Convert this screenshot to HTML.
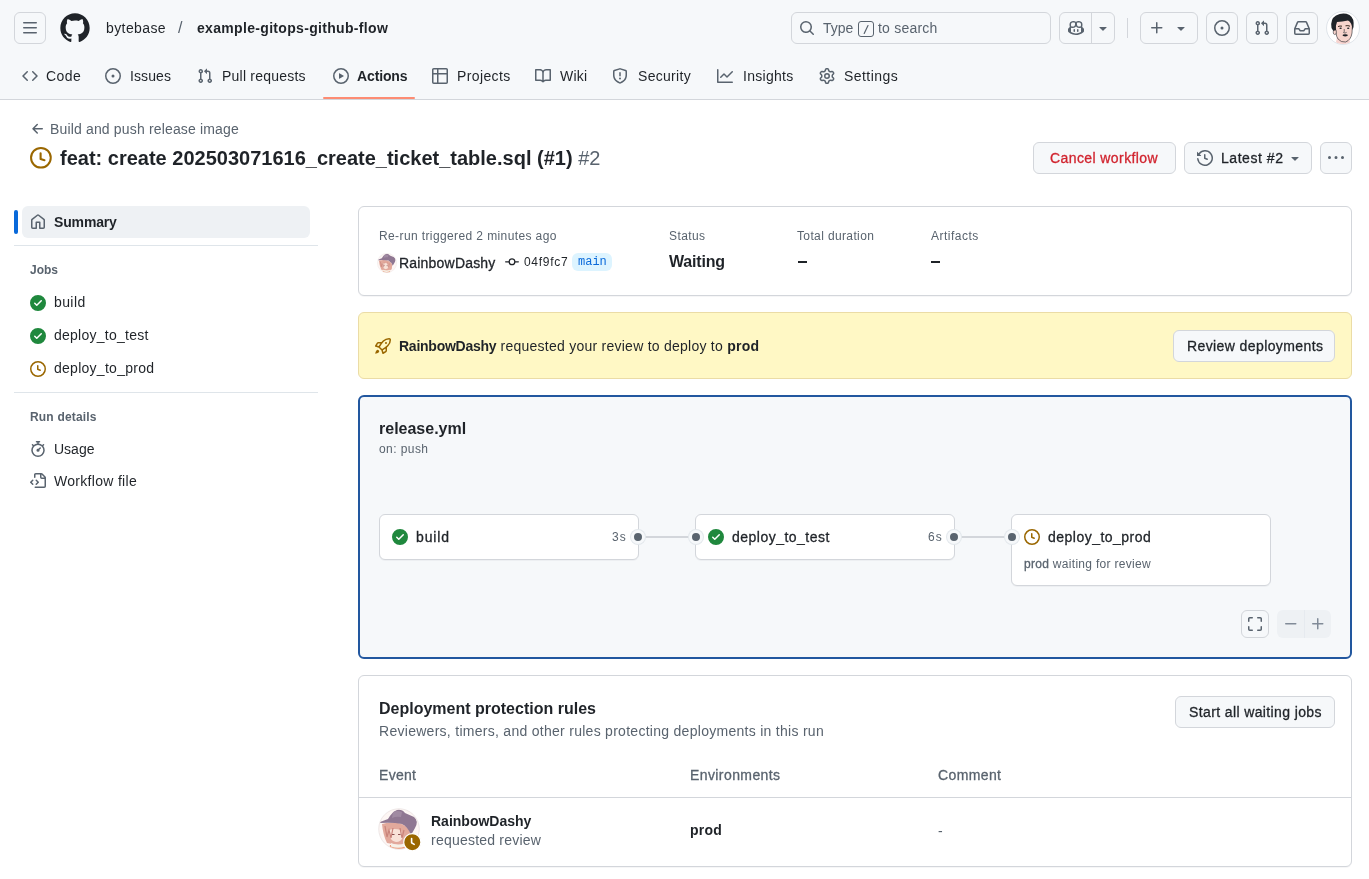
<!DOCTYPE html>
<html><head><meta charset="utf-8">
<style>
*{box-sizing:border-box;margin:0;padding:0}
html,body{width:1369px;height:879px;overflow:hidden;background:#fff}
.t{will-change:transform}
body{font-family:"Liberation Sans",sans-serif;font-size:14px;color:#1f2328;position:relative}
.abs{position:absolute}
svg{display:block}
.ic{fill:#59636e}
.hdr{position:absolute;left:0;top:0;width:1369px;height:100px;background:#f6f8fa;border-bottom:1px solid #d3d6db}
.btn{position:absolute;border:1px solid #d3d6db;border-radius:6px;background:#f6f8fa}
.t{position:absolute;white-space:nowrap;line-height:1}
.muted{color:#59636e}
.b{font-weight:bold}
.dot{width:14px;height:14px;border-radius:50%;background:#59636e;border:3px solid #f6f8fa;box-shadow:0 0 0 1px #e3e8ec}
.m{-webkit-text-stroke:.3px currentColor}
.box{position:absolute;border:1px solid #d3d6db;box-shadow:0 1px 0 rgba(31,35,40,.04);border-radius:6px;background:#fff}
</style></head><body>
<div class="hdr">
  <div class="btn" style="left:14px;top:12px;width:32px;height:32px">
    <svg class="abs" style="left:7px;top:7px" width="16" height="16" viewBox="0 0 16 16"><path class="ic" d="M1 2.75A.75.75 0 0 1 1.75 2h12.5a.75.75 0 0 1 0 1.5H1.75A.75.75 0 0 1 1 2.75Zm0 5A.75.75 0 0 1 1.75 7h12.5a.75.75 0 0 1 0 1.5H1.75A.75.75 0 0 1 1 7.75ZM1.75 12h12.5a.75.75 0 0 1 0 1.5H1.75a.75.75 0 0 1 0-1.5Z"/></svg>
  </div>
  <svg class="abs" style="left:59px;top:12px" width="32" height="32" viewBox="0 0 24 24"><path fill="#1f2328" d="M12 1C5.923 1 1 5.923 1 12c0 4.867 3.149 8.979 7.521 10.436.55.096.756-.233.756-.522 0-.262-.013-1.128-.013-2.049-2.764.509-3.479-.674-3.699-1.292-.124-.317-.66-1.293-1.127-1.554-.385-.207-.936-.715-.014-.729.866-.014 1.485.797 1.691 1.128.99 1.663 2.571 1.196 3.204.907.096-.715.385-1.196.701-1.471-2.448-.275-5.005-1.224-5.005-5.432 0-1.196.426-2.186 1.128-2.956-.111-.275-.496-1.402.11-2.915 0 0 .921-.288 3.024 1.128a10.193 10.193 0 0 1 2.75-.371c.936 0 1.871.123 2.75.371 2.104-1.43 3.025-1.128 3.025-1.128.605 1.513.221 2.64.111 2.915.701.77 1.127 1.747 1.127 2.956 0 4.222-2.571 5.157-5.019 5.432.399.344.743 1.004.743 2.035 0 1.471-.014 2.654-.014 3.025 0 .289.206.632.756.522C19.851 20.979 23 16.854 23 12c0-6.077-4.922-11-11-11Z"/></svg>
  <div class="t" style="left:106px;top:21px;letter-spacing:.4px">bytebase</div>
  <div class="t muted" style="left:178px;top:20px;font-size:16px">/</div>
  <div class="t b" style="left:197px;top:21px;letter-spacing:.32px">example-gitops-github-flow</div>

  <!-- search -->
  <div class="btn" style="left:791px;top:12px;width:260px;height:32px">
    <svg class="abs" style="left:7px;top:7px" width="16" height="16" viewBox="0 0 16 16"><path class="ic" d="M10.68 11.74a6 6 0 0 1-7.922-8.982 6 6 0 0 1 8.982 7.922l3.04 3.04a.749.749 0 0 1-.326 1.275.749.749 0 0 1-.734-.215ZM11.5 7a4.499 4.499 0 1 0-8.997 0A4.499 4.499 0 0 0 11.5 7Z"/></svg>
    <div class="t muted" style="left:31px;top:8px">Type</div>
    <div class="abs" style="left:66px;top:8px;width:16px;height:16px;border:1px solid #59636e;border-radius:3px"><svg class="abs" style="left:0;top:0" width="14" height="14" viewBox="0 0 14 13"><path d="M9 3 5.2 11" stroke="#59636e" stroke-width="1.2" stroke-linecap="round"/></svg></div>
    <div class="t muted" style="left:86px;top:8px;letter-spacing:.22px">to search</div>
  </div>

  <!-- copilot group -->
  <div class="btn" style="left:1059px;top:12px;width:56px;height:32px">
    <div class="abs" style="left:31px;top:0;width:1px;height:30px;background:#d3d6db"></div>
    <svg class="abs" style="left:8px;top:7px" width="16" height="16" viewBox="0 0 16 16"><path class="ic" d="M7.998 15.035c-4.562 0-7.873-2.914-7.998-3.749V9.338c.085-.628.677-1.686 1.588-2.065.013-.07.024-.143.036-.218.029-.183.06-.384.126-.612-.201-.508-.254-1.084-.254-1.656 0-.87.128-1.769.693-2.484.579-.733 1.494-1.124 2.724-1.261 1.206-.134 2.262.034 2.944.765.05.053.096.108.139.165.044-.057.094-.112.143-.165.682-.731 1.738-.899 2.944-.765 1.23.137 2.145.528 2.724 1.261.566.715.693 1.614.693 2.484 0 .572-.053 1.148-.254 1.656.066.228.098.429.126.612.012.076.024.148.037.218.924.385 1.522 1.471 1.591 2.095v1.872c0 .766-3.351 3.795-8.002 3.795Zm0-1.485c2.28 0 4.584-1.11 5.002-1.433V7.862l-.023-.116c-.49.21-1.075.291-1.727.291-1.146 0-2.059-.327-2.71-.991A3.222 3.222 0 0 1 8 6.303a3.24 3.24 0 0 1-.544.743c-.65.664-1.563.991-2.71.991-.652 0-1.236-.081-1.727-.291l-.023.116v4.255c.419.323 2.722 1.433 5.002 1.433ZM6.762 2.83c-.193-.206-.637-.413-1.682-.297-1.019.113-1.479.404-1.713.7-.247.312-.369.789-.369 1.554 0 .793.129 1.171.308 1.371.162.181.519.379 1.442.379.853 0 1.339-.235 1.638-.54.315-.322.527-.827.617-1.553.117-.935-.037-1.395-.241-1.614Zm4.155-.297c-1.044-.116-1.488.091-1.681.297-.204.219-.359.679-.242 1.614.091.726.303 1.231.618 1.553.299.305.784.54 1.638.54.922 0 1.280-.198 1.442-.379.179-.2.308-.578.308-1.371 0-.765-.123-1.242-.37-1.554-.233-.296-.693-.587-1.713-.7Z"/><path class="ic" d="M6.25 9.037a.75.75 0 0 1 .75.75v1.501a.75.75 0 0 1-1.5 0V9.787a.75.75 0 0 1 .75-.75Zm4.25.75v1.501a.75.75 0 0 1-1.5 0V9.787a.75.75 0 0 1 1.5 0Z"/></svg>
    <svg class="abs" style="left:35px;top:7px" width="16" height="16" viewBox="0 0 16 16"><path class="ic" d="m4.427 7.427 3.396 3.396a.25.25 0 0 0 .354 0l3.396-3.396A.25.25 0 0 0 11.396 7H4.604a.25.25 0 0 0-.177.427Z"/></svg>
  </div>
  <div class="abs" style="left:1127px;top:18px;width:1px;height:20px;background:#d3d6db"></div>
  <div class="btn" style="left:1140px;top:12px;width:58px;height:32px">
    <svg class="abs" style="left:8px;top:7px" width="16" height="16" viewBox="0 0 16 16"><path class="ic" d="M7.75 2a.75.75 0 0 1 .75.75V7h4.25a.75.75 0 0 1 0 1.5H8.5v4.25a.75.75 0 0 1-1.5 0V8.5H2.75a.75.75 0 0 1 0-1.5H7V2.75A.75.75 0 0 1 7.75 2Z"/></svg>
    <svg class="abs" style="left:32px;top:7px" width="16" height="16" viewBox="0 0 16 16"><path class="ic" d="m4.427 7.427 3.396 3.396a.25.25 0 0 0 .354 0l3.396-3.396A.25.25 0 0 0 11.396 7H4.604a.25.25 0 0 0-.177.427Z"/></svg>
  </div>
  <div class="btn" style="left:1206px;top:12px;width:32px;height:32px">
    <svg class="abs" style="left:7px;top:7px" width="16" height="16" viewBox="0 0 16 16"><path class="ic" d="M8 9.5a1.5 1.5 0 1 0 0-3 1.5 1.5 0 0 0 0 3Z"/><path class="ic" d="M8 0a8 8 0 1 1 0 16A8 8 0 0 1 8 0ZM1.5 8a6.5 6.5 0 1 0 13 0 6.5 6.5 0 0 0-13 0Z"/></svg>
  </div>
  <div class="btn" style="left:1246px;top:12px;width:32px;height:32px">
    <svg class="abs" style="left:7px;top:7px" width="16" height="16" viewBox="0 0 16 16"><path class="ic" d="M1.5 3.25a2.25 2.25 0 1 1 3 2.122v5.256a2.251 2.251 0 1 1-1.5 0V5.372A2.25 2.25 0 0 1 1.5 3.25Zm5.677-.177L9.573.677A.25.25 0 0 1 10 .854V2.5h1A2.5 2.5 0 0 1 13.5 5v5.628a2.251 2.251 0 1 1-1.500 0V5a1 1 0 0 0-1-1h-1v1.646a.25.25 0 0 1-.427.177L7.177 3.427a.25.25 0 0 1 0-.354ZM3.75 2.5a.75.75 0 1 0 0 1.5.75.75 0 0 0 0-1.5Zm0 9.5a.75.75 0 1 0 0 1.5.75.75 0 0 0 0-1.5Zm8.25.75a.75.75 0 1 0 1.5 0 .75.75 0 0 0-1.5 0Z"/></svg>
  </div>
  <div class="btn" style="left:1286px;top:12px;width:32px;height:32px">
    <svg class="abs" style="left:7px;top:7px" width="16" height="16" viewBox="0 0 16 16"><path class="ic" d="M2.8 2.06A1.75 1.75 0 0 1 4.41 1h7.18c.7 0 1.333.417 1.61 1.06l2.74 6.395c.04.093.06.194.06.295v4.5A1.75 1.75 0 0 1 14.25 15H1.75A1.75 1.75 0 0 1 0 13.25v-4.5c0-.101.02-.202.06-.295Zm1.61.44a.25.25 0 0 0-.23.152L1.887 8H4.75a.75.75 0 0 1 .6.3L6.625 10h2.75l1.275-1.7a.75.75 0 0 1 .6-.3h2.863L11.82 2.652a.25.25 0 0 0-.23-.152Zm10.09 7h-2.875l-1.275 1.7a.75.75 0 0 1-.6.3h-3.5a.75.75 0 0 1-.6-.3L4.375 9.5H1.5v3.75c0 .138.112.25.25.25h12.5a.25.25 0 0 0 .25-.25Z"/></svg>
  </div>
  <!-- avatar -->
  <svg class="abs" style="left:1326px;top:11px" width="34" height="34" viewBox="0 0 34 34">
    <circle cx="17" cy="17" r="16.5" fill="#fff" stroke="#d8dee4" stroke-width=".8"/>
    <clipPath id="avc"><circle cx="17" cy="17" r="16"/></clipPath>
    <g clip-path="url(#avc)">
      <path d="M11 26 L23 26 L24.5 34 L9.5 34Z" fill="#f6d3cf"/>
      <path d="M9.5 10 Q9 24 12 28 Q15 31.5 19.5 31 Q25 29 26 22 L26.5 12 Q23 7 17 7.5 Q11 8 9.5 10Z" fill="#f7d4cc" stroke="#1f2328" stroke-width=".6"/>
      <ellipse cx="8.8" cy="21" rx="1.6" ry="2.6" fill="#f7d4cc" stroke="#1f2328" stroke-width=".5"/>
      <path d="M5.5 17 Q4 8 10 4.5 Q17 1 23.5 4 Q28.5 7 27.5 16 L26.5 19 Q26 11 22 9.5 Q16 10.5 11 11 Q9.5 14 10 19 Q8 20 7 19.5Z" fill="#1f2328"/>
      <path d="M12 15.6 Q14 14.6 16 15.2M19.5 14.8 Q22 14.2 24 15.2" stroke="#3a2a20" stroke-width="1" fill="none"/>
      <ellipse cx="14.6" cy="17.2" rx="1.2" ry=".75" fill="#1f2328"/>
      <ellipse cx="22.2" cy="17.2" rx="1.2" ry=".75" fill="#1f2328"/>
      <path d="M18.2 18 Q18.6 21 17.6 21.6 Q19 22.6 20.6 21.4" stroke="#1f2328" stroke-width=".6" fill="none"/>
      <ellipse cx="19.2" cy="24.3" rx="2.7" ry="1.1" fill="#1f2328"/>
    </g>
  </svg>

  <!-- nav -->
  <div class="abs" style="left:323px;top:97px;width:92px;height:2px;background:#fd8c73;border-radius:1px"></div>
  <svg class="abs" style="left:22px;top:68px" width="16" height="16" viewBox="0 0 16 16"><path class="ic" d="m11.28 3.22 4.25 4.25a.75.75 0 0 1 0 1.06l-4.25 4.25a.749.749 0 0 1-1.275-.326.749.749 0 0 1 .215-.734L13.94 8l-3.72-3.72a.749.749 0 0 1 .326-1.275.749.749 0 0 1 .734.215Zm-6.56 0a.751.751 0 0 1 1.042.018.751.751 0 0 1 .018 1.042L2.06 8l3.72 3.72a.749.749 0 0 1-.326 1.275.749.749 0 0 1-.734-.215L.47 8.53a.75.75 0 0 1 0-1.06Z"/></svg>
  <div class="t" style="left:46px;top:69px;letter-spacing:0.45px">Code</div>
  <svg class="abs" style="left:105px;top:68px" width="16" height="16" viewBox="0 0 16 16"><path class="ic" d="M8 9.5a1.5 1.5 0 1 0 0-3 1.5 1.5 0 0 0 0 3Z M8 0a8 8 0 1 1 0 16A8 8 0 0 1 8 0ZM1.5 8a6.5 6.5 0 1 0 13 0 6.5 6.5 0 0 0-13 0Z"/></svg>
  <div class="t" style="left:130px;top:69px;letter-spacing:0.1px">Issues</div>
  <svg class="abs" style="left:197px;top:68px" width="16" height="16" viewBox="0 0 16 16"><path class="ic" d="M1.5 3.25a2.25 2.25 0 1 1 3 2.122v5.256a2.251 2.251 0 1 1-1.5 0V5.372A2.25 2.25 0 0 1 1.5 3.25Zm5.677-.177L9.573.677A.25.25 0 0 1 10 .854V2.5h1A2.5 2.5 0 0 1 13.5 5v5.628a2.251 2.251 0 1 1-1.500 0V5a1 1 0 0 0-1-1h-1v1.646a.25.25 0 0 1-.427.177L7.177 3.427a.25.25 0 0 1 0-.354ZM3.75 2.5a.75.75 0 1 0 0 1.5.75.75 0 0 0 0-1.5Zm0 9.5a.75.75 0 1 0 0 1.5.75.75 0 0 0 0-1.5Zm8.25.75a.75.75 0 1 0 1.5 0 .75.75 0 0 0-1.5 0Z"/></svg>
  <div class="t" style="left:222px;top:69px;letter-spacing:0.22px">Pull requests</div>
  <svg class="abs" style="left:333px;top:68px" width="16" height="16" viewBox="0 0 16 16"><path class="ic" d="M8 0a8 8 0 1 1 0 16A8 8 0 0 1 8 0ZM1.5 8a6.5 6.5 0 1 0 13 0 6.5 6.5 0 0 0-13 0Zm4.879-2.773 4.264 2.559a.25.25 0 0 1 0 .428l-4.264 2.559A.25.25 0 0 1 6 10.559V5.442a.25.25 0 0 1 .379-.215Z"/></svg>
  <div class="t b" style="left:357px;top:69px;letter-spacing:-0.13px">Actions</div>
  <svg class="abs" style="left:432px;top:68px" width="16" height="16" viewBox="0 0 16 16"><path class="ic" d="M0 1.75C0 .784.784 0 1.75 0h12.5C15.216 0 16 .784 16 1.75v12.5A1.75 1.75 0 0 1 14.25 16H1.75A1.75 1.75 0 0 1 0 14.25ZM6.5 6.5v8h7.750a.25.25 0 0 0 .25-.25V6.5Zm8-1.5V1.75a.25.25 0 0 0-.25-.25H6.5V5Zm-13 1.5v7.75c0 .138.112.25.25.25H5v-8ZM5 5V1.5H1.75a.25.25 0 0 0-.25.25V5Z"/></svg>
  <div class="t" style="left:457px;top:69px;letter-spacing:0.38px">Projects</div>
  <svg class="abs" style="left:535px;top:68px" width="16" height="16" viewBox="0 0 16 16"><path class="ic" d="M0 1.75A.75.75 0 0 1 .75 1h4.253c1.227 0 2.317.59 3 1.501A3.743 3.743 0 0 1 11.006 1h4.245a.75.75 0 0 1 .75.75v10.5a.75.75 0 0 1-.75.75h-4.507a2.25 2.25 0 0 0-1.591.659l-.622.621a.75.75 0 0 1-1.060 0l-.622-.621A2.25 2.25 0 0 0 5.258 13H.75a.75.75 0 0 1-.75-.75Zm7.251 10.324.004-5.073-.002-2.253A2.25 2.25 0 0 0 5.003 2.5H1.5v9h3.757a3.75 3.75 0 0 1 1.994.574ZM8.755 4.75l-.004 7.322a3.752 3.752 0 0 1 1.992-.572H14.5v-9h-3.495a2.25 2.25 0 0 0-2.25 2.25Z"/></svg>
  <div class="t" style="left:560px;top:69px;letter-spacing:0.2px">Wiki</div>
  <svg class="abs" style="left:612px;top:68px" width="16" height="16" viewBox="0 0 16 16"><path class="ic" d="M7.467.133a1.748 1.748 0 0 1 1.066 0l5.25 1.68A1.75 1.75 0 0 1 15 3.48V7c0 1.566-.32 3.182-1.303 4.682-.983 1.498-2.585 2.813-5.032 3.855a1.697 1.697 0 0 1-1.330 0c-2.447-1.042-4.049-2.357-5.032-3.855C1.32 10.182 1 8.566 1 7V3.48a1.755 1.755 0 0 1 1.217-1.667Zm.61 1.429a.25.25 0 0 0-.153 0l-5.25 1.68a.25.25 0 0 0-.174.238V7c0 1.358.275 2.666 1.057 3.86.784 1.194 2.121 2.34 4.366 3.297a.196.196 0 0 0 .154 0c2.245-.956 3.582-2.104 4.366-3.298C13.225 9.666 13.5 8.36 13.5 7V3.48a.251.251 0 0 0-.174-.237l-5.25-1.68ZM8.75 4.75v3a.75.75 0 0 1-1.5 0v-3a.75.75 0 0 1 1.5 0ZM9 10.5a1 1 0 1 1-2 0 1 1 0 0 1 2 0Z"/></svg>
  <div class="t" style="left:638px;top:69px;letter-spacing:0.3px">Security</div>
  <svg class="abs" style="left:717px;top:68px" width="16" height="16" viewBox="0 0 16 16"><path class="ic" d="M1.5 1.75V13.5h13.75a.75.75 0 0 1 0 1.5H.75a.75.75 0 0 1-.75-.75V1.75a.75.75 0 0 1 1.5 0Zm14.28 2.53-5.25 5.25a.75.75 0 0 1-1.060 0L7 7.06 4.28 9.78a.751.751 0 0 1-1.042-.018.751.751 0 0 1-.018-1.042l3.25-3.25a.75.75 0 0 1 1.060 0L10 7.94l4.72-4.72a.751.751 0 0 1 1.042.018.751.751 0 0 1 .018 1.042Z"/></svg>
  <div class="t" style="left:743px;top:69px;letter-spacing:0.28px">Insights</div>
  <svg class="abs" style="left:819px;top:68px" width="16" height="16" viewBox="0 0 16 16"><path class="ic" d="M8 0a8.2 8.2 0 0 1 .701.031C9.444.095 9.99.645 10.16 1.29l.288 1.107c.018.066.079.158.212.224.231.114.454.243.668.386.123.082.233.09.299.071l1.103-.303c.644-.176 1.392.021 1.82.63.27.385.506.792.704 1.218.315.675.111 1.422-.364 1.891l-.814.806c-.049.048-.098.147-.088.294.016.257.016.515 0 .772-.01.147.038.246.088.294l.814.806c.475.469.679 1.216.364 1.891a7.977 7.977 0 0 1-.704 1.217c-.428.61-1.176.807-1.82.63l-1.102-.302c-.067-.019-.177-.011-.3.071a5.909 5.909 0 0 1-.668.386c-.133.066-.194.158-.211.224l-.29 1.106c-.168.646-.715 1.196-1.458 1.26a8.006 8.006 0 0 1-1.402 0c-.743-.064-1.289-.614-1.458-1.26l-.289-1.106c-.018-.066-.079-.158-.212-.224a5.738 5.738 0 0 1-.668-.386c-.123-.082-.233-.09-.299-.071l-1.103.303c-.644.176-1.392-.021-1.82-.63a8.12 8.12 0 0 1-.704-1.218c-.315-.675-.111-1.422.363-1.891l.815-.806c.05-.048.098-.147.088-.294a6.214 6.214 0 0 1 0-.772c.01-.147-.038-.246-.088-.294l-.815-.806C.635 6.045.431 5.298.746 4.623a7.92 7.92 0 0 1 .704-1.217c.428-.61 1.176-.807 1.82-.63l1.102.302c.067.019.177.011.3-.071.214-.143.437-.272.668-.386.133-.066.194-.158.211-.224l.29-1.106C6.009.645 6.556.095 7.299.03 7.53.01 7.764 0 8 0Zm-.571 1.525c-.036.003-.108.036-.137.146l-.289 1.105c-.147.561-.549.967-.998 1.189-.173.086-.34.183-.5.29-.417.278-.97.423-1.529.27l-1.103-.303c-.109-.03-.175.016-.195.045-.22.312-.412.644-.573.99-.014.031-.021.11.059.19l.815.806c.411.406.562.957.53 1.456a4.709 4.709 0 0 0 0 .582c.032.499-.119 1.05-.53 1.456l-.815.806c-.081.08-.073.159-.059.19.162.346.353.677.573.989.02.03.085.076.195.046l1.102-.303c.56-.153 1.113-.008 1.53.27.161.107.328.204.501.29.447.222.85.629.997 1.189l.289 1.105c.029.109.101.143.137.146a6.6 6.6 0 0 0 1.142 0c.036-.003.108-.036.137-.146l.289-1.105c.147-.561.549-.967.998-1.189.173-.086.34-.183.5-.29.417-.278.97-.423 1.529-.27l1.103.303c.109.029.175-.016.195-.045.22-.313.411-.644.573-.99.014-.031.021-.11-.059-.19l-.815-.806c-.411-.406-.562-.957-.53-1.456a4.709 4.709 0 0 0 0-.582c-.032-.499.119-1.05.53-1.456l.815-.806c.081-.08.073-.159.059-.19a6.464 6.464 0 0 0-.573-.989c-.02-.03-.085-.076-.195-.046l-1.102.303c-.56.153-1.113.008-1.53-.27a4.44 4.440 0 0 0-.501-.29c-.447-.222-.85-.629-.997-1.189l-.289-1.105c-.029-.11-.101-.143-.137-.146a6.6 6.6 0 0 0-1.142 0ZM11 8a3 3 0 1 1-6 0 3 3 0 0 1 6 0ZM9.5 8a1.5 1.5 0 1 0-3.001.001A1.5 1.5 0 0 0 9.5 8Z"/></svg>
  <div class="t" style="left:844px;top:69px;letter-spacing:0.45px">Settings</div>
</div>

<!-- title area -->
<svg class="abs" style="left:30px;top:121px" width="16" height="16" viewBox="0 0 16 16"><path class="ic" d="M7.78 12.53a.75.75 0 0 1-1.06 0L2.47 8.28a.75.75 0 0 1 0-1.06l4.25-4.25a.751.751 0 0 1 1.042.018.751.751 0 0 1 .018 1.042L4.81 7h7.44a.75.75 0 0 1 0 1.5H4.81l2.97 2.97a.75.75 0 0 1 0 1.06Z"/></svg>
<div class="t muted" style="left:50px;top:122px;letter-spacing:.16px">Build and push release image</div>
<svg class="abs" style="left:29px;top:146px" width="24" height="24" viewBox="0 0 24 24"><circle cx="11.9" cy="11.75" r="9.85" fill="none" stroke="#9a6700" stroke-width="2"/><path d="M11.6 7.3V13l3.9 1.2" fill="none" stroke="#9a6700" stroke-width="2.1" stroke-linecap="round" stroke-linejoin="round"/></svg>
<div class="t" style="left:60px;top:148px;font-size:20px"><span class="b" id="title">feat: create 202503071616_create_ticket_table.sql (#1)</span> <span class="muted">#2</span></div>

<div class="btn" style="left:1033px;top:142px;width:143px;height:32px"><div class="t m" style="left:16px;top:8px;color:#d1242f;letter-spacing:.41px">Cancel workflow</div></div>
<div class="btn" style="left:1184px;top:142px;width:128px;height:32px">
  <svg class="abs" style="left:12px;top:7px" width="16" height="16" viewBox="0 0 16 16"><path class="ic" d="m.427 1.927 1.215 1.215a8.002 8.002 0 1 1-1.600 5.685.75.75 0 1 1 1.493-.154 6.5 6.5 0 1 0 1.18-4.458l1.358 1.358A.25.25 0 0 1 3.896 6H.25A.25.25 0 0 1 0 5.75V2.104a.25.25 0 0 1 .427-.177ZM7.75 4a.75.75 0 0 1 .75.75v2.992l2.028.812a.75.75 0 0 1-.557 1.392l-2.5-1A.751.751 0 0 1 7 8.25v-3.5A.75.75 0 0 1 7.75 4Z"/></svg>
  <div class="t m" style="left:36px;top:8px;letter-spacing:.54px">Latest #2</div>
  <svg class="abs" style="left:102px;top:7px" width="16" height="16" viewBox="0 0 16 16"><path class="ic" d="m4.427 7.427 3.396 3.396a.25.25 0 0 0 .354 0l3.396-3.396A.25.25 0 0 0 11.396 7H4.604a.25.25 0 0 0-.177.427Z"/></svg>
</div>
<div class="btn" style="left:1320px;top:142px;width:32px;height:32px">
  <svg class="abs" style="left:7px;top:7px" width="16" height="16" viewBox="0 0 16 16"><path class="ic" d="M8 9a1.5 1.5 0 1 0 0-3 1.5 1.5 0 0 0 0 3ZM1.5 9a1.5 1.5 0 1 0 0-3 1.5 1.5 0 0 0 0 3Zm13 0a1.5 1.5 0 1 0 0-3 1.5 1.5 0 0 0 0 3Z"/></svg>
</div>

<!-- sidebar -->
<div class="abs" style="left:14px;top:210px;width:4px;height:24px;background:#0969da;border-radius:2px"></div>
<div class="abs" style="left:22px;top:206px;width:288px;height:32px;background:#eef1f4;border-radius:6px"></div>
<svg class="abs" style="left:30px;top:214px" width="16" height="16" viewBox="0 0 16 16"><path class="ic" d="M6.906.664a1.749 1.749 0 0 1 2.187 0l5.25 4.2c.415.332.657.835.657 1.367v7.019A1.75 1.75 0 0 1 13.25 15h-3.5a.75.75 0 0 1-.75-.75V9H7v5.25a.75.75 0 0 1-.75.75h-3.5A1.75 1.75 0 0 1 1 13.25V6.23c0-.531.242-1.034.657-1.366l5.25-4.2Zm1.25 1.171a.25.25 0 0 0-.312 0l-5.25 4.2a.25.25 0 0 0-.094.196v7.019c0 .138.112.25.25.25H5.5V8.25a.75.75 0 0 1 .75-.75h3.5a.75.75 0 0 1 .75.75v5.250h2.75a.25.25 0 0 0 .25-.25V6.23a.25.25 0 0 0-.094-.195Z"/></svg>
<div class="t b" style="left:54px;top:215px;letter-spacing:-.15px">Summary</div>
<div class="abs" style="left:14px;top:245px;width:304px;height:1px;background:#dfe5ea"></div>
<div class="t b muted" style="left:30px;top:264px;font-size:12px">Jobs</div>
<svg class="abs" style="left:30px;top:295px" width="16" height="16" viewBox="0 0 16 16"><path fill="#1f883d" d="M8 16A8 8 0 1 1 8 0a8 8 0 0 1 0 16Zm3.78-9.72a.751.751 0 0 0-.018-1.042.751.751 0 0 0-1.042-.018L6.75 9.19 5.28 7.72a.751.751 0 0 0-1.042.018.751.751 0 0 0-.018 1.042l2 2a.75.75 0 0 0 1.06 0Z"/></svg>
<div class="t" style="left:54px;top:295px;letter-spacing:.4px">build</div>
<svg class="abs" style="left:30px;top:328px" width="16" height="16" viewBox="0 0 16 16"><path fill="#1f883d" d="M8 16A8 8 0 1 1 8 0a8 8 0 0 1 0 16Zm3.78-9.72a.751.751 0 0 0-.018-1.042.751.751 0 0 0-1.042-.018L6.75 9.19 5.28 7.72a.751.751 0 0 0-1.042.018.751.751 0 0 0-.018 1.042l2 2a.75.75 0 0 0 1.06 0Z"/></svg>
<div class="t" style="left:54px;top:328px;letter-spacing:.25px">deploy_to_test</div>
<svg class="abs" style="left:30px;top:361px" width="16" height="16" viewBox="0 0 16 16"><path fill="#9a6700" d="M8 0a8 8 0 1 1 0 16A8 8 0 0 1 8 0ZM1.5 8a6.5 6.5 0 1 0 13 0 6.5 6.5 0 0 0-13 0Zm7-3.25v2.992l2.028.812a.75.75 0 0 1-.557 1.392l-2.5-1A.751.751 0 0 1 7 8.25v-3.5a.75.75 0 0 1 1.5 0Z"/></svg>
<div class="t" style="left:54px;top:361px;letter-spacing:.27px">deploy_to_prod</div>
<div class="abs" style="left:14px;top:392px;width:304px;height:1px;background:#dfe5ea"></div>
<div class="t b muted" style="left:30px;top:411px;font-size:12px;letter-spacing:.18px">Run details</div>
<svg class="abs" style="left:30px;top:441px" width="16" height="16" viewBox="0 0 16 16"><path class="ic" d="M5.75.75A.75.75 0 0 1 6.5 0h3a.75.75 0 0 1 0 1.5h-.75v1l-.001.041a6.718 6.718 0 0 1 3.464 1.435l.007-.006.75-.75a.749.749 0 0 1 1.275.326.749.749 0 0 1-.215.734l-.75.75-.006.007a6.75 6.75 0 1 1-10.548 0L2.72 5.03l-.75-.75a.751.751 0 0 1 .018-1.042.751.751 0 0 1 1.042-.018l.75.75.007.006A6.72 6.72 0 0 1 7.25 2.541V1.5H6.5a.75.75 0 0 1-.75-.75ZM8 14.5a5.25 5.25 0 1 0-.001-10.501A5.25 5.25 0 0 0 8 14.5Zm.389-6.7 1.330-1.330a.75.75 0 1 1 1.061 1.060L9.45 8.861A1.503 1.503 0 0 1 8 10.75a1.499 1.499 0 1 1 .389-2.950Z"/></svg>
<div class="t" style="left:54px;top:442px">Usage</div>
<svg class="abs" style="left:30px;top:473px" width="16" height="16" viewBox="0 0 16 16"><path class="ic" d="M4 1.75C4 .784 4.784 0 5.750 0h5.586c.464 0 .909.184 1.237.513l2.914 2.914c.329.328.513.773.513 1.237v8.586A1.75 1.75 0 0 1 14.25 15h-9a.75.75 0 0 1 0-1.5h9a.25.25 0 0 0 .25-.25V6h-2.75A1.75 1.75 0 0 1 10 4.25V1.5H5.75a.25.25 0 0 0-.25.25v2.5a.75.75 0 0 1-1.5 0Zm1.72 4.97a.75.75 0 0 1 1.06 0l2 2a.75.75 0 0 1 0 1.06l-2 2a.749.749 0 0 1-1.275-.326.749.749 0 0 1 .215-.734l1.47-1.47-1.47-1.47a.75.75 0 0 1 0-1.06ZM3.28 7.78 1.810 9.25l1.47 1.47a.751.751 0 0 1-.018 1.042.751.751 0 0 1-1.042.018l-2-2a.75.75 0 0 1 0-1.060l2-2a.751.751 0 0 1 1.042.018.751.751 0 0 1 .018 1.042Zm8.22-6.218V4.25c0 .138.112.25.25.25h2.688l-.011-.013-2.914-2.914-.013-.011Z"/></svg>
<div class="t" style="left:54px;top:474px;letter-spacing:.3px">Workflow file</div>

<!-- summary box -->
<div class="box" style="left:358px;top:206px;width:994px;height:90px"></div>
<div class="t muted" style="left:379px;top:230px;font-size:12px;letter-spacing:.39px">Re-run triggered 2 minutes ago</div>
<svg class="abs" style="left:377px;top:253px" width="20" height="20" viewBox="4 4 42 42"><use href="#rd"/></svg>
<div class="t m" style="left:399px;top:256px;letter-spacing:.2px">RainbowDashy</div>
<svg class="abs" style="left:505px;top:255px" width="14" height="14" viewBox="0 0 16 16"><path fill="#1f2328" d="M11.93 8.5a4.002 4.002 0 0 1-7.86 0H.75a.75.75 0 0 1 0-1.5h3.32a4.002 4.002 0 0 1 7.86 0h3.32a.75.75 0 0 1 0 1.5Zm-1.43-.75a2.5 2.5 0 1 0-5 0 2.5 2.5 0 0 0 5 0Z"/></svg>
<div class="t" style="left:524px;top:256px;font-size:12px;letter-spacing:.7px">04f9fc7</div>
<div class="abs" style="left:572px;top:253px;width:40px;height:18px;background:#ddf4ff;border-radius:6px"></div>
<div class="t" style="left:578px;top:256px;font-size:12px;font-family:'Liberation Mono',monospace;color:#0969da">main</div>
<div class="t muted" style="left:669px;top:230px;font-size:12px;letter-spacing:.4px">Status</div>
<div class="t b" style="left:669px;top:254px;font-size:16px;letter-spacing:-.2px">Waiting</div>
<div class="t muted" style="left:797px;top:230px;font-size:12px;letter-spacing:.37px">Total duration</div>
<div class="abs" style="left:798px;top:261px;width:9px;height:2px;background:#1f2328"></div>
<div class="t muted" style="left:931px;top:230px;font-size:12px;letter-spacing:.5px">Artifacts</div>
<div class="abs" style="left:931px;top:261px;width:9px;height:2px;background:#1f2328"></div>

<!-- banner -->
<div class="abs" style="left:358px;top:312px;width:994px;height:67px;background:#fff8c5;border:1px solid #ebdca6;border-radius:6px"></div>
<svg class="abs" style="left:375px;top:338px" width="16" height="16" viewBox="0 0 16 16"><path fill="#9a6700" d="M14.064 0h.186C15.216 0 16 .784 16 1.75v.186a8.752 8.752 0 0 1-2.564 6.186l-.458.459c-.314.314-.641.616-.979.904v3.207c0 .608-.315 1.172-.833 1.49l-2.774 1.707a.749.749 0 0 1-1.11-.418l-.954-3.102a1.214 1.214 0 0 1-.145-.125L3.754 9.816a1.218 1.218 0 0 1-.124-.145L.528 8.717a.749.749 0 0 1-.418-1.110l1.71-2.774A1.748 1.748 0 0 1 3.310 4h3.204c.288-.338.59-.665.904-.979l.459-.458A8.749 8.749 0 0 1 14.064 0ZM8.938 3.623h-.002l-.458.458c-.76.76-1.437 1.598-2.020 2.5l-1.5 2.317 2.143 2.143 2.317-1.5c.902-.583 1.74-1.26 2.499-2.020l.459-.458a7.25 7.25 0 0 0 2.123-5.127V1.75a.25.25 0 0 0-.25-.25h-.186a7.249 7.249 0 0 0-5.125 2.123ZM3.56 14.56c-.732.732-2.334 1.045-3.005 1.148a.234.234 0 0 1-.201-.064.234.234 0 0 1-.064-.201c.103-.671.416-2.273 1.15-3.003a1.502 1.502 0 1 1 2.120 2.120Zm6.94-3.935c-.088.06-.177.118-.266.175l-2.35 1.521.548 1.783 1.949-1.2a.25.25 0 0 0 .119-.213ZM3.678 8.116 5.2 5.766c.058-.09.117-.178.176-.266H3.309a.25.25 0 0 0-.213.119l-1.2 1.950ZM12 5a1 1 0 1 1-2 0 1 1 0 0 1 2 0Z"/></svg>
<div class="t" style="left:399px;top:339px;letter-spacing:.25px"><span class="b" style="letter-spacing:-.25px">RainbowDashy</span> requested your review to deploy to <span class="b">prod</span></div>
<div class="btn" style="left:1173px;top:330px;width:162px;height:32px"><div class="t m" style="left:13px;top:8px;letter-spacing:.4px">Review deployments</div></div>

<!-- graph -->
<div class="abs" style="left:358px;top:395px;width:994px;height:264px;background:#f6f8fa;border:2px solid #22579f;border-radius:6px"></div>
<div class="t b" style="left:379px;top:421px;font-size:16px">release.yml</div>
<div class="t muted" style="left:379px;top:443px;font-size:12px;letter-spacing:.43px">on: push</div>

<div class="box" style="left:379px;top:514px;width:260px;height:46px"></div>
<svg class="abs" style="left:392px;top:529px" width="16" height="16" viewBox="0 0 16 16"><path fill="#1f883d" d="M8 16A8 8 0 1 1 8 0a8 8 0 0 1 0 16Zm3.78-9.72a.751.751 0 0 0-.018-1.042.751.751 0 0 0-1.042-.018L6.75 9.19 5.28 7.72a.751.751 0 0 0-1.042.018.751.751 0 0 0-.018 1.042l2 2a.75.75 0 0 0 1.06 0Z"/></svg>
<div class="t m" style="left:416px;top:530px;letter-spacing:.85px">build</div>
<div class="t muted" style="left:612px;top:531px;font-size:12px;letter-spacing:1.2px">3s</div>

<div class="abs" style="left:643px;top:536px;width:50px;height:2px;background:#d3d6db"></div>
<div class="box" style="left:695px;top:514px;width:260px;height:46px"></div>
<svg class="abs" style="left:708px;top:529px" width="16" height="16" viewBox="0 0 16 16"><path fill="#1f883d" d="M8 16A8 8 0 1 1 8 0a8 8 0 0 1 0 16Zm3.78-9.72a.751.751 0 0 0-.018-1.042.751.751 0 0 0-1.042-.018L6.75 9.19 5.28 7.72a.751.751 0 0 0-1.042.018.751.751 0 0 0-.018 1.042l2 2a.75.75 0 0 0 1.06 0Z"/></svg>
<div class="t m" style="left:732px;top:530px;letter-spacing:.48px">deploy_to_test</div>
<div class="t muted" style="left:928px;top:531px;font-size:12px;letter-spacing:1.2px">6s</div>

<div class="abs" style="left:959px;top:536px;width:50px;height:2px;background:#d3d6db"></div>
<div class="box" style="left:1011px;top:514px;width:260px;height:72px"></div>
<svg class="abs" style="left:1024px;top:529px" width="16" height="16" viewBox="0 0 16 16"><path fill="#9a6700" d="M8 0a8 8 0 1 1 0 16A8 8 0 0 1 8 0ZM1.5 8a6.5 6.5 0 1 0 13 0 6.5 6.5 0 0 0-13 0Zm7-3.25v2.992l2.028.812a.75.75 0 0 1-.557 1.392l-2.5-1A.751.751 0 0 1 7 8.25v-3.5a.75.75 0 0 1 1.5 0Z"/></svg>
<div class="t m" style="left:1048px;top:530px;letter-spacing:.48px">deploy_to_prod</div>
<div class="t muted" style="left:1024px;top:558px;font-size:12px;letter-spacing:.3px"><span class="m">prod</span> waiting for review</div>

<div class="abs dot" style="left:631px;top:530px"></div>
<div class="abs dot" style="left:689px;top:530px"></div>
<div class="abs dot" style="left:947px;top:530px"></div>
<div class="abs dot" style="left:1005px;top:530px"></div>

<div class="btn" style="left:1241px;top:610px;width:28px;height:28px">
  <svg class="abs" style="left:5px;top:5px" width="16" height="16" viewBox="0 0 16 16"><path class="ic" d="M1.75 10a.75.75 0 0 1 .75.75v2.5c0 .138.112.25.25.25h2.5a.75.75 0 0 1 0 1.5h-2.5A1.75 1.75 0 0 1 1 13.25v-2.5a.75.75 0 0 1 .75-.75Zm12.5 0a.75.75 0 0 1 .75.75v2.5A1.75 1.75 0 0 1 13.25 15h-2.5a.75.75 0 0 1 0-1.5h2.5a.25.25 0 0 0 .25-.25v-2.5a.75.75 0 0 1 .75-.75ZM2.75 2.5a.25.25 0 0 0-.25.25v2.5a.75.75 0 0 1-1.5 0v-2.5C1 1.784 1.784 1 2.75 1h2.5a.75.75 0 0 1 0 1.5ZM10 1.75a.75.75 0 0 1 .75-.75h2.5c.966 0 1.75.784 1.75 1.75v2.5a.75.75 0 0 1-1.5 0v-2.5a.25.25 0 0 0-.25-.25h-2.5a.75.75 0 0 1-.75-.75Z"/></svg>
</div>
<div class="abs" style="left:1277px;top:610px;width:54px;height:28px;background:#eef1f4;border-radius:6px">
  <div class="abs" style="left:27px;top:0;width:1px;height:28px;background:#e6eaef"></div>
  <svg class="abs" style="left:6px;top:6px" width="16" height="16" viewBox="0 0 16 16"><path fill="#818b98" d="M2 7.75A.75.75 0 0 1 2.75 7h10a.75.75 0 0 1 0 1.5h-10A.75.75 0 0 1 2 7.75Z"/></svg>
  <svg class="abs" style="left:33px;top:6px" width="16" height="16" viewBox="0 0 16 16"><path fill="#818b98" d="M7.75 2a.75.75 0 0 1 .75.75V7h4.25a.75.75 0 0 1 0 1.5H8.5v4.25a.75.75 0 0 1-1.5 0V8.5H2.75a.75.75 0 0 1 0-1.5H7V2.75A.75.75 0 0 1 7.75 2Z"/></svg>
</div>

<!-- deployment protection rules -->
<div class="box" style="left:358px;top:675px;width:994px;height:192px"></div>
<div class="t b" style="left:379px;top:701px;font-size:16px">Deployment protection rules</div>
<div class="t muted" style="left:379px;top:724px;letter-spacing:.28px">Reviewers, timers, and other rules protecting deployments in this run</div>
<div class="btn" style="left:1175px;top:696px;width:160px;height:32px"><div class="t m" style="left:13px;top:8px;letter-spacing:.38px">Start all waiting jobs</div></div>
<div class="t m muted" style="left:379px;top:768px;letter-spacing:.3px">Event</div>
<div class="t m muted" style="left:690px;top:768px;letter-spacing:.41px">Environments</div>
<div class="t m muted" style="left:938px;top:768px;letter-spacing:.38px">Comment</div>
<div class="abs" style="left:359px;top:797px;width:992px;height:1px;background:#d3d6db"></div>
<svg class="abs" style="left:374px;top:804px" width="50" height="50" viewBox="0 0 50 50">
  <defs>
    <clipPath id="av2"><circle cx="25" cy="25" r="20"/></clipPath>
    <g id="rd">
      <circle cx="25" cy="25" r="20.5" fill="#fdf6f4"/>
      <g clip-path="url(#av2)">
        <path d="M8 20 Q14 18 24 19 Q33 21 36 28 L35 38 Q30 42 24 41 L13 39 Q9 31 8 20Z" fill="#e2a99c"/>
        <path d="M15 26 Q20 24 27 26 L29 33 Q27 38 22 38 Q17 37 16 33Z" fill="#f8e2d8"/>
        <path d="M11 22 L13 33 L15 26 L17 34 L19 24 M26 24 L28 34 L30 26" stroke="#c9837a" stroke-width="1.2" fill="none"/>
        <path d="M18 30.5h2.5M24 30.5h2.5" stroke="#8a5050" stroke-width="1"/>
        <path d="M6 18 L14 15 Q18 8 23 6 Q28 5 31 9 L40 13 Q45 17 41 24 L37 31 Q34 23 28 20 Q18 18 6 19Z" fill="#8f7792"/>
        <path d="M19 8 Q24 6 28 8 L27 13 Q22 12 18 14Z" fill="#a08aa2"/>
        <path d="M16 41 L31 41 L33 50 L14 50Z" fill="#ee9d7c"/>
        <path d="M17 39 Q24 42 31 39 L31 42.5 Q24 45 17 42.5Z" fill="#f6f1e8"/>
      </g>
      <circle cx="25" cy="25" r="20.25" fill="none" stroke="#e6e0e0" stroke-width=".7"/>
    </g>
  </defs>
  <use href="#rd"/>
  <circle cx="38.3" cy="38.2" r="8.6" fill="#9a6700" stroke="#fff" stroke-width="1.2"/>
  <path d="M37.6 34.6v4.2l2.6 1.6" stroke="#fff" stroke-width="1.6" fill="none" stroke-linecap="round" stroke-linejoin="round"/>
</svg>
<div class="t b" style="left:431px;top:814px">RainbowDashy</div>
<div class="t muted" style="left:431px;top:833px;letter-spacing:.22px">requested review</div>
<div class="t b" style="left:690px;top:823px;letter-spacing:.2px">prod</div>
<div class="t muted" style="left:938px;top:824px">-</div>
</body></html>
